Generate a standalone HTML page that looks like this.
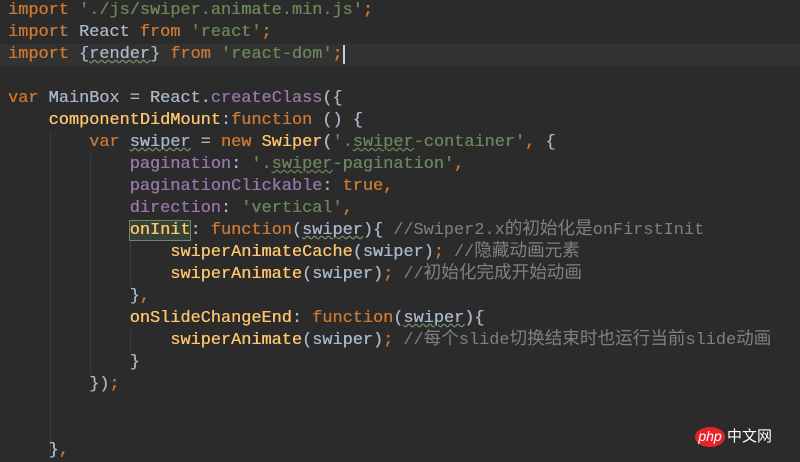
<!DOCTYPE html>
<html><head><meta charset="utf-8"><style>
body{margin:0;width:800px;height:454px;background:#2b2b2b;overflow:hidden;position:relative}
pre{margin:0;position:absolute;left:8px;top:0px;font-family:"Liberation Mono","Noto Sans CJK SC",monospace;font-size:16.9px;line-height:22px;color:#a9b7c6;font-weight:normal;text-shadow:0.3px 0 0 currentColor}
.k{color:#cc7832}.s{color:#6a8759}.f{color:#ffc66d}.p{color:#9876aa}.c{color:#808080;text-shadow:none}
.z{font-size:17.6px;line-height:0}
.hl{position:absolute;left:0;top:44px;width:800px;height:22px;background:#323232}
.w{text-decoration:underline wavy #6a8759;text-decoration-thickness:1px}
.box{background:#344134;outline:1px solid #6a8a6a}
.g{position:absolute;width:1px;background:#3b3b3b}
.logo{position:absolute;left:695px;top:425px;font-family:"Liberation Sans","Noto Sans CJK SC",sans-serif}
</style></head><body>
<div class="hl"></div>
<div class="g" style="left:50px;top:132px;height:322px"></div>
<div class="g" style="left:90px;top:154px;height:220px"></div>
<div class="g" style="left:130px;top:242px;height:44px"></div>
<div class="g" style="left:130px;top:330px;height:22px"></div>
<pre><span class="k">import</span> <span class="s">'./js/swiper.animate.min.js'</span><span class="k">;</span>
<span class="k">import</span> React <span class="k">from</span> <span class="s">'react'</span><span class="k">;</span>
<span class="k">import</span> {<span class="w">render</span>} <span class="k">from</span> <span class="s">'react-dom'</span><span class="k">;</span><span style="border-left:2px solid #ccc"></span>

<span class="k">var</span> MainBox = React.<span class="p">createClass</span>({
    <span class="f">componentDidMount</span>:<span class="k">function</span> () {
        <span class="k">var</span> <span class="w">swiper</span> = <span class="k">new</span> <span class="f">Swiper</span>(<span class="s">'.<span class="w">swiper</span>-container'</span><span class="k">,</span> {
            <span class="p">pagination</span>: <span class="s">'.<span class="w">swiper</span>-pagination'</span><span class="k">,</span>
            <span class="p">paginationClickable</span>: <span class="k">true,</span>
            <span class="p">direction</span>: <span class="s">'vertical'</span><span class="k">,</span>
            <span class="f box">onInit</span>: <span class="k">function</span>(<span class="w">swiper</span>){ <span class="c">//Swiper2.x<span class="z">的初始化是</span>onFirstInit</span>
                <span class="f">swiperAnimateCache</span>(swiper)<span class="k">;</span> <span class="c">//<span class="z">隐藏动画元素</span></span>
                <span class="f">swiperAnimate</span>(swiper)<span class="k">;</span> <span class="c">//<span class="z">初始化完成开始动画</span></span>
            }<span class="k">,</span>
            <span class="f">onSlideChangeEnd</span>: <span class="k">function</span>(<span class="w">swiper</span>){
                <span class="f">swiperAnimate</span>(swiper)<span class="k">;</span> <span class="c">//<span class="z">每个</span>slide<span class="z">切换结束时也运行当前</span>slide<span class="z">动画</span></span>
            }
        })<span class="k">;</span>


    }<span class="k">,</span></pre>
<div class="logo"><span style="display:inline-block;background:#e8232b;color:#fff;border-radius:50%;width:30px;height:20px;text-align:center;font-size:14px;line-height:19px;font-style:italic">php</span><span style="color:#fff;font-size:15px;margin-left:2px">中文网</span></div>
</body></html>
